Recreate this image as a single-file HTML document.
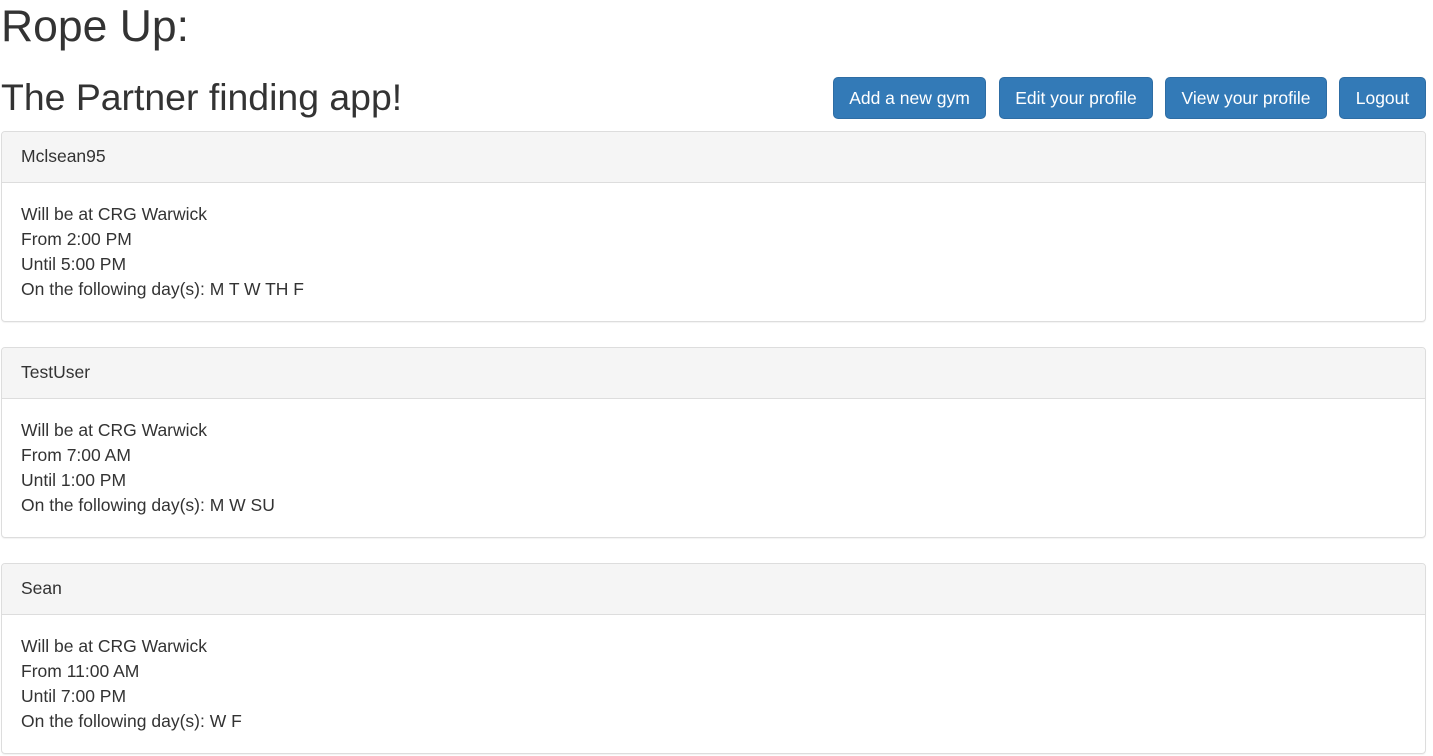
<!DOCTYPE html>
<html><head><meta charset="utf-8"><style>
body{margin:0;font-family:"Liberation Sans",Arial,sans-serif;color:#333;background:#fff;width:1433px;height:756px;overflow:hidden;position:relative}
.t1{position:absolute;left:1px;top:1px;font-size:44.5px;line-height:52px;margin:0;font-weight:400}
.t2{position:absolute;left:1px;top:75px;font-size:37.4px;line-height:44px;margin:0;font-weight:400}
.btn{position:absolute;top:77px;height:42px;box-sizing:border-box;background:#337ab7;border:1px solid #2e6da4;border-radius:5px;color:#fff;font-size:17.5px;line-height:40px;text-align:center}
.panel{position:absolute;left:1px;width:1425px;height:191px;box-sizing:border-box;border:1px solid #ddd;border-radius:4px;box-shadow:0 1px 1px rgba(0,0,0,.05)}
.ph{height:51px;box-sizing:border-box;background:#f5f5f5;border-bottom:1px solid #ddd;padding:0 19px;font-size:17.5px;line-height:49px;border-radius:3px 3px 0 0}
.pb{padding:19px 19px;font-size:17.5px;line-height:25px}
</style></head><body>
<h1 class="t1">Rope Up:</h1>
<h2 class="t2">The Partner finding app!</h2>
<div class="btn" style="left:833px;width:153px">Add a new gym</div>
<div class="btn" style="left:999px;width:154px">Edit your profile</div>
<div class="btn" style="left:1165px;width:162px">View your profile</div>
<div class="btn" style="left:1339px;width:87px">Logout</div>
<div class="panel" style="top:131px"><div class="ph">Mclsean95</div><div class="pb">Will be at CRG Warwick<br>From 2:00 PM<br>Until 5:00 PM<br>On the following day(s): M T W TH F</div></div>
<div class="panel" style="top:347px"><div class="ph">TestUser</div><div class="pb">Will be at CRG Warwick<br>From 7:00 AM<br>Until 1:00 PM<br>On the following day(s): M W SU</div></div>
<div class="panel" style="top:563px"><div class="ph">Sean</div><div class="pb">Will be at CRG Warwick<br>From 11:00 AM<br>Until 7:00 PM<br>On the following day(s): W F</div></div>
</body></html>
